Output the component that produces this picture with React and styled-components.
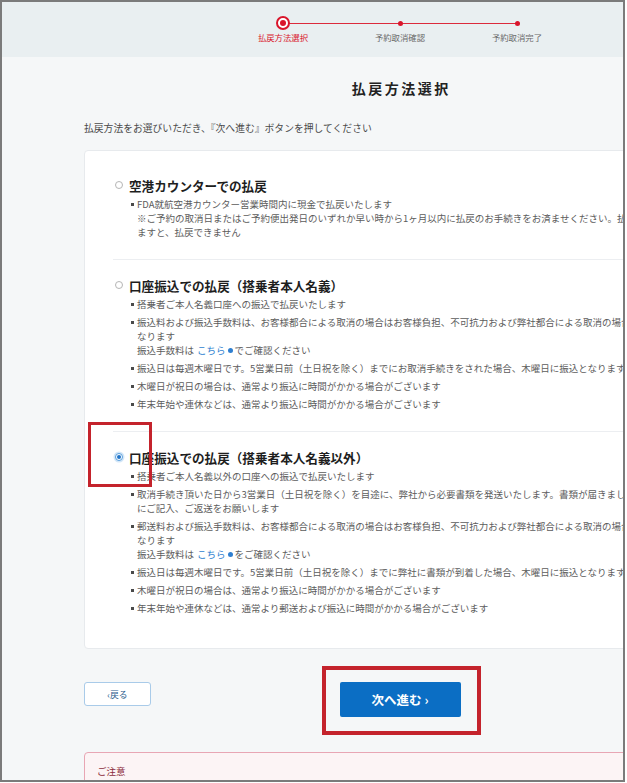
import React from 'react';
import styled, { createGlobalStyle } from 'styled-components';

const GlobalStyle = createGlobalStyle`
  html, body {
    margin: 0;
    padding: 0;
    background: #ffffff;
  }
  body {
    font-family: "Noto Sans CJK JP", "Noto Sans", sans-serif;
    color: #333;
  }
`;

const Frame = styled.div`
  width: 625px;
  height: 782px;
  box-sizing: border-box;
  border: 2px solid #7b7b7b;
  overflow: hidden;
  background: #f5f7f8;
`;

const Header = styled.header`
  height: 55px;
  background: #e9eff1;
  width: 796px;
  box-sizing: border-box;
  padding: 14px 82px 0 82px;
`;

const Stepper = styled.ol`
  display: flex;
  justify-content: center;
  margin: 0;
  padding: 0;
  list-style: none;
`;

const Step = styled.li`
  position: relative;
  width: 117px;
  display: flex;
  flex-direction: column;
  align-items: center;

  &:not(:first-child)::before {
    content: '';
    position: absolute;
    top: 6.5px;
    right: 50%;
    width: 100%;
    height: 1px;
    background: #dc2a3c;
  }
`;

const Marker = styled.span`
  position: relative;
  z-index: 1;
  width: 14px;
  height: 14px;
  display: flex;
  align-items: center;
  justify-content: center;
`;

const Ring = styled.span`
  width: 10px;
  height: 10px;
  border: 2px solid #d9152b;
  border-radius: 50%;
  background: #fff;
  display: flex;
  align-items: center;
  justify-content: center;

  &::after {
    content: '';
    width: 6px;
    height: 6px;
    border-radius: 50%;
    background: #d9152b;
  }
`;

const Dot = styled.span`
  width: 5px;
  height: 5px;
  border-radius: 50%;
  background: #d9152b;
`;

const StepLabel = styled.span`
  margin-top: 2px;
  font-size: 8.4px;
  line-height: 11px;
  color: ${(p) => (p.$active ? '#d9152b' : '#6a6a6a')};
  white-space: nowrap;
`;

const Page = styled.main`
  width: 796px;
  box-sizing: border-box;
  padding: 0 82px;
`;

const Title = styled.h1`
  margin: 21px 0 0 0;
  font-size: 14px;
  line-height: 20px;
  font-weight: 700;
  letter-spacing: 2.5px;
  padding-left: 2.5px;
  text-align: center;
  color: #222;
`;

const Intro = styled.p`
  margin: 23px 0 0 0;
  font-size: 9.8px;
  line-height: 14px;
  color: #4a4a4a;
  white-space: nowrap;
`;

const Card = styled.section`
  margin-top: 15px;
  background: #fff;
  border: 1px solid #e7eaed;
  border-radius: 4px;
  padding: 9px 0 13px 28px;
`;

const Option = styled.div`
  position: relative;
  padding: 17px 0 20px 0;
  border-top: ${(p) => (p.$first ? 'none' : '1px solid #eceef1')};
`;

const OptionHead = styled.label`
  display: flex;
  align-items: center;
  gap: 6px;
  height: 16px;
`;

const Radio = styled.span`
  margin-left: 2px;
  width: 8px;
  height: 8px;
  box-sizing: border-box;
  border-radius: 50%;
  border: 1px solid ${(p) => (p.$checked ? '#5a9fdc' : '#b5b5b5')};
  background: #fff;
  display: flex;
  align-items: center;
  justify-content: center;
  box-shadow: ${(p) => (p.$checked ? '0 0 0 1.5px #d4e7f8' : 'none')};

  &::after {
    content: '';
    display: ${(p) => (p.$checked ? 'block' : 'none')};
    width: 4px;
    height: 4px;
    border-radius: 50%;
    background: #1f74c9;
  }
`;

const OptionTitle = styled.span`
  font-size: 12.6px;
  font-weight: 700;
  color: #1e1e1e;
  white-space: nowrap;
`;

const Bullets = styled.ul`
  list-style: none;
  margin: 4px 0 0 0;
  padding: 0 0 0 18px;
  display: flex;
  flex-direction: column;
  gap: 4px;
`;

const Bullet = styled.li`
  display: flex;
  font-size: 9.5px;
  line-height: 14px;
  color: #5c5c5c;
  white-space: nowrap;

  &::before {
    content: '';
    flex-shrink: 0;
    width: 3px;
    height: 3px;
    margin: 6px 3px 0 0;
    background: #4a4a4a;
  }
`;

const Link = styled.a`
  color: #2f7fd0;
  text-decoration: none;
  margin-left: 3px;
  display: inline-flex;
  align-items: center;
  gap: 2px;
  margin-right: 2px;

  &::after {
    content: '';
    width: 5px;
    height: 5px;
    border-radius: 50%;
    background: #2f7fd0;
  }
`;

const Annotation = styled.span`
  position: absolute;
  box-sizing: border-box;
  border: ${(p) => p.$w}px solid #c4232c;
  pointer-events: none;
`;

const RadioMark = styled(Annotation)`
  left: -25px;
  top: -10px;
  width: 64px;
  height: 65px;
`;

const ButtonMark = styled(Annotation)`
  left: -18px;
  right: -20px;
  top: -16px;
  bottom: -18px;
`;

const Actions = styled.div`
  margin-top: 33px;
  display: grid;
  grid-template-columns: 1fr auto 1fr;
  align-items: start;
`;

const BackButton = styled.button`
  justify-self: start;
  width: 67px;
  height: 24px;
  background: #fff;
  border: 1.5px solid #a9cbe9;
  border-radius: 3px;
  font-family: inherit;
  font-size: 8.8px;
  color: #2b5c8c;
  padding: 0;
`;

const NextWrap = styled.div`
  position: relative;
  justify-self: center;
`;

const NextButton = styled.button`
  display: block;
  width: 121px;
  height: 35px;
  background: #0b6ec4;
  border: none;
  border-radius: 2px;
  font-family: inherit;
  font-size: 12.5px;
  font-weight: 700;
  color: #fff;
  padding: 0;
`;

const Notice = styled.div`
  margin-top: 35px;
  border: 1.5px solid #e8a6b4;
  border-radius: 4px;
  background: #fcf4f5;
  padding: 11px 12px 20px;
  font-size: 9.5px;
  line-height: 14px;
  color: #8b2c3c;
`;

const options = [
  {
    title: '空港カウンターでの払戻',
    items: [
      [
        'FDA就航空港カウンター営業時間内に現金で払戻いたします',
        '※ご予約の取消日またはご予約便出発日のいずれか早い時から1ヶ月以内に払戻のお手続きをお済ませください。払戻期限を過ぎ',
        'ますと、払戻できません',
      ],
    ],
  },
  {
    title: '口座振込での払戻（搭乗者本人名義）',
    items: [
      ['搭乗者ご本人名義口座への振込で払戻いたします'],
      [
        '振込料および振込手数料は、お客様都合による取消の場合はお客様負担、不可抗力および弊社都合による取消の場合は弊社負担と',
        'なります',
        { before: '振込手数料は', after: 'でご確認ください' },
      ],
      ['振込日は毎週木曜日です。5営業日前（土日祝を除く）までにお取消手続きをされた場合、木曜日に振込となります'],
      ['木曜日が祝日の場合は、通常より振込に時間がかかる場合がございます'],
      ['年末年始や連休などは、通常より振込に時間がかかる場合がございます'],
    ],
  },
  {
    title: '口座振込での払戻（搭乗者本人名義以外）',
    checked: true,
    items: [
      ['搭乗者ご本人名義以外の口座への振込で払戻いたします'],
      [
        '取消手続き頂いた日から3営業日（土日祝を除く）を目途に、弊社から必要書類を発送いたします。書類が届きましたら必要事項',
        'にご記入、ご返送をお願いします',
      ],
      [
        '郵送料および振込手数料は、お客様都合による取消の場合はお客様負担、不可抗力および弊社都合による取消の場合は弊社負担と',
        'なります',
        { before: '振込手数料は', after: 'をご確認ください' },
      ],
      ['振込日は毎週木曜日です。5営業日前（土日祝を除く）までに弊社に書類が到着した場合、木曜日に振込となります'],
      ['木曜日が祝日の場合は、通常より振込に時間がかかる場合がございます'],
      ['年末年始や連休などは、通常より郵送および振込に時間がかかる場合がございます'],
    ],
  },
];

const renderLine = (line, index) => {
  if (typeof line === 'string') {
    return <div key={index}>{line}</div>;
  }
  return (
    <div key={index}>
      {line.before}
      <Link href="#">こちら</Link>
      {line.after}
    </div>
  );
};

export default function App() {
  return (
    <>
      <GlobalStyle />
      <Frame>
        <Header>
          <Stepper>
            <Step>
              <Marker>
                <Ring />
              </Marker>
              <StepLabel $active>払戻方法選択</StepLabel>
            </Step>
            <Step>
              <Marker>
                <Dot />
              </Marker>
              <StepLabel>予約取消確認</StepLabel>
            </Step>
            <Step>
              <Marker>
                <Dot />
              </Marker>
              <StepLabel>予約取消完了</StepLabel>
            </Step>
          </Stepper>
        </Header>
        <Page>
          <Title>払戻方法選択</Title>
          <Intro>払戻方法をお選びいただき、『次へ進む』ボタンを押してください</Intro>
          <Card>
            {options.map((option, i) => (
              <Option key={option.title} $first={i === 0}>
                {option.checked && <RadioMark $w={3} />}
                <OptionHead>
                  <Radio $checked={option.checked} />
                  <OptionTitle>{option.title}</OptionTitle>
                </OptionHead>
                <Bullets>
                  {option.items.map((lines, j) => (
                    <Bullet key={j}>
                      <div>{lines.map(renderLine)}</div>
                    </Bullet>
                  ))}
                </Bullets>
              </Option>
            ))}
          </Card>
          <Actions>
            <BackButton>‹戻る</BackButton>
            <NextWrap>
              <NextButton>次へ進む ›</NextButton>
              <ButtonMark $w={4} />
            </NextWrap>
            <div />
          </Actions>
          <Notice>ご注意</Notice>
        </Page>
      </Frame>
    </>
  );
}
